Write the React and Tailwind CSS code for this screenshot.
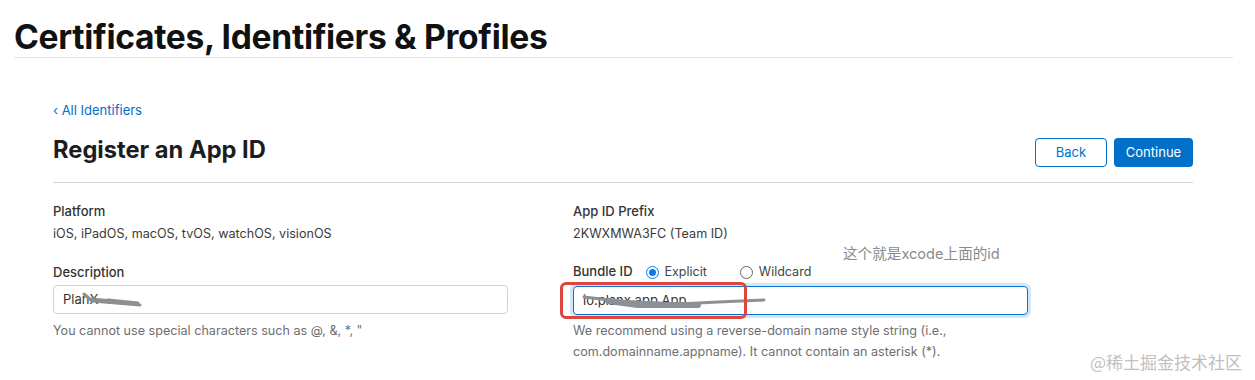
import React from "react";

const font = { fontFamily: "Inter, 'Noto Sans CJK SC', sans-serif" };

function Radio({ checked, label }) {
  return (
    <label className="flex items-center gap-[6px] text-[12.5px] text-[#444]">
      {checked ? (
        <span className="w-[13px] h-[13px] rounded-full border-[1.5px] border-[#0a7cf0] bg-white flex items-center justify-center">
          <span className="w-[7px] h-[7px] rounded-full bg-[#0a7cf0]" />
        </span>
      ) : (
        <span className="w-[13px] h-[13px] rounded-full border border-[#666] bg-white" />
      )}
      {label}
    </label>
  );
}

export default function App() {
  return (
    <div className="w-[1255px] h-[380px] bg-white overflow-hidden relative" style={font}>
      {/* Page header */}
      <div className="pl-[14px] pr-[22px] pt-[17px]">
        <h1 className="text-[33.6px] leading-[40px] font-bold text-[#111] tracking-[-0.3px]">
          Certificates, Identifiers &amp; Profiles
        </h1>
        <div className="h-px bg-[#e3e3e3]" />
      </div>

      <div className="ml-[53px] w-[1140px]">
        <a className="block mt-[44px] text-[13px] leading-[16px] text-[#0070c9]">‹ All Identifiers</a>

        <div className="mt-[14px] flex items-center justify-between">
          <h2 className="text-[23.7px] leading-[30px] font-bold text-[#1d1d1f]">Register an App ID</h2>
          <div className="flex gap-[7px] mt-[6px]">
            <button className="w-[72px] h-[29px] rounded-[4px] border border-[#0070c9] text-[13px] text-[#0070c9] bg-white">
              Back
            </button>
            <button className="w-[79px] h-[29px] rounded-[4px] bg-[#0070c9] text-[13px] text-white">
              Continue
            </button>
          </div>
        </div>

        <div className="mt-[15px] h-px bg-[#d6d6d6]" />

        <div className="mt-[20px] grid grid-cols-[455px_455px] gap-x-[65px]">
          {/* Left column */}
          <div>
            <div className="text-[13px] leading-[16px] font-medium text-[#333]">Platform</div>
            <div className="mt-[7px] text-[12.6px] leading-[16px] text-[#3a3a3a]">
              iOS, iPadOS, macOS, tvOS, watchOS, visionOS
            </div>
            <div className="mt-[22px] text-[13px] leading-[16px] font-medium text-[#333]">Description</div>
            <div className="mt-[5px] h-[29px] border border-[#d2d2d2] rounded-[4px] flex items-center px-[9px] relative">
              <span className="text-[13px] text-[#333]">PlanX</span>
              <svg className="absolute left-[26px] top-[5px]" width="70" height="18" viewBox="0 0 70 18">
                <path d="M4 3 L12 10 L60 14 L28 9 L58 12 L10 8" stroke="#8d8f92" strokeWidth="3" fill="none" strokeLinecap="round" strokeLinejoin="round" />
              </svg>
            </div>
            <div className="mt-[9px] text-[12.6px] leading-[16px] text-[#6e6e73]">
              You cannot use special characters such as @, &amp;, *, "
            </div>
          </div>

          {/* Right column */}
          <div className="relative">
            <div className="text-[13px] leading-[16px] font-medium text-[#333]">App ID Prefix</div>
            <div className="mt-[7px] text-[12.6px] leading-[16px] text-[#3a3a3a]">2KWXMWA3FC (Team ID)</div>
            <div className="absolute left-[270px] top-[41px] text-[14.6px] leading-[20px] text-[#8a8a8a]">
              这个就是xcode上面的id
            </div>
            <div className="mt-[22px] flex items-center h-[16px]">
              <span className="text-[13px] font-medium text-[#333] mr-[13px]">Bundle ID</span>
              <div className="flex gap-[33px]">
                <Radio checked label="Explicit" />
                <Radio label="Wildcard" />
              </div>
            </div>
            <div className="mt-[6px] h-[29px] border border-[#0a6fd1] rounded-[4px] shadow-[0_0_0_3px_#cfe6fb] flex items-center px-[9px] relative">
              <span className="text-[13px] text-[#333]">io.planx.app.App</span>
              <svg className="absolute left-[4px] top-[4px]" width="190" height="22" viewBox="0 0 190 22">
                <path d="M6 6 L40 10 L100 13 L140 11 L186 9" stroke="#8d8f92" strokeWidth="3" fill="none" strokeLinecap="round" />
                <path d="M30 10 L60 14 L120 14" stroke="#8d8f92" strokeWidth="6" fill="none" strokeLinecap="round" />
              </svg>
              <div className="absolute left-[-14px] top-[-5px] w-[187px] h-[37px] border-[3px] border-[#e0453d] rounded-[6px]" />
            </div>
            <div className="mt-[5px] text-[12.6px] leading-[21px] text-[#6e6e73] w-[400px]">
              We recommend using a reverse-domain name style string (i.e., com.domainname.appname). It cannot contain an asterisk (*).
            </div>
          </div>
        </div>
      </div>

      <div className="absolute left-[1090px] top-[351px] text-[17px] leading-[22px] text-[#c0c0c0]" style={{ fontFamily: "'Noto Sans CJK SC', sans-serif" }}>
        @稀土掘金技术社区
      </div>
    </div>
  );
}
